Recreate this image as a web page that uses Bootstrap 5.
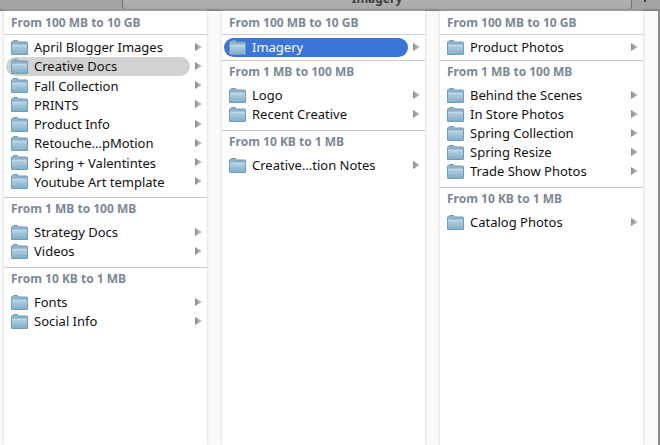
<!DOCTYPE html>
<html lang="en">
<head>
<meta charset="utf-8">
<meta name="viewport" content="width=device-width, initial-scale=1">
<title>Imagery</title>
<link href="https://cdn.jsdelivr.net/npm/bootstrap@5.3.0/dist/css/bootstrap.min.css" rel="stylesheet">
<style>
body { font-family: "Noto Sans", "Open Sans", sans-serif; font-size: 13px; line-height: 19px; color: #111; background: #fafafa; }
.tab-strip { height: 11px; background: #a3a3a3; border-bottom: 2px solid #858585; padding: 0 28px 0 122px; }
.tab-item { height: 10px; background: linear-gradient(#b0b0b0, #a9a9a9); border: 1px solid #717171; border-top: 0; border-radius: 0 0 4px 4px; color: #3f3f3f; }
.tab-title { font-size: 12px; font-weight: 700; line-height: 18px; margin-top: -10px; }
.tab-add { width: 28px; height: 9px; margin-right: -28px; padding-left: 9px; }
.browser { gap: 15px; padding-left: 4px; padding-right: 15px; border-right: 2px solid #8c8c8c; }
.finder-col { flex: 1 1 0; min-width: 0; background: #fff; box-shadow: 0 0 3px #ccc; }
.size-group + .size-group { border-top: 1px solid #c6c6c6; }
.size-head { font-size: 12px; font-weight: 700; line-height: 22px; color: #7b8798; padding-left: 7px; margin: 0; }
.entries { padding: 3px 0 6px; }
.size-group:first-child .size-head { line-height: 23px; border-bottom: 1px solid #cfcfcf; }
.size-group:first-child .entries { padding: 3px 0; }
.size-group:first-child .entries.long-list { min-height: 162px; padding-bottom: 5px; }
.entry { border: 0; background: none; padding: 0 5px 0 2px; text-align: left; color: inherit; height: 19px; }
.entry-label { border-radius: 10px; padding-left: 5px; gap: 6px; height: 19px; }
.entry .arrow { margin-left: 5px; margin-bottom: 2px; }
.chosen .entry-label { background: #d2d2d2; }
.current .entry-label { background: #3b75d7; color: #fff; }
</style>
</head>
<body class="min-vh-100 d-flex flex-column overflow-hidden">
<svg width="0" height="0" class="position-absolute" aria-hidden="true">
  <defs>
    <linearGradient id="fg" x1="0" y1="0" x2="0" y2="1"><stop offset="0" stop-color="#b9d5e5"/><stop offset="1" stop-color="#7fadc9"/></linearGradient>
    <linearGradient id="ag" x1="0" y1="0" x2="1" y2="0"><stop offset="0" stop-color="#8c8c8c"/><stop offset="1" stop-color="#c8c8c8"/></linearGradient>
    <symbol id="folder" viewBox="0 0 17 16">
      <path d="M.5 14V2.500Q.5 1.500 1.500 1.500H2l.5-1H6.500l.8 1.500H15.500Q16.500 2 16.500 3V14Z" fill="#8db4ca" stroke="#6e9ab5"/>
      <path d="M.5 4.500H16.500V14Q16.500 14.500 16 14.500H1Q.5 14.500.5 14Z" fill="url(#fg)" stroke="#6f9cb8"/>
      <path d="M1 5H16" stroke="#cfe3ee"/>
    </symbol>
    <symbol id="arrow" viewBox="0 0 7 8"><path d="M0 0 7 4 0 8Z" fill="url(#ag)"/></symbol>
  </defs>
</svg>
<header class="tab-strip d-flex overflow-hidden">
  <div class="tab-item flex-grow-1 text-center overflow-hidden"><div class="tab-title">Imagery</div></div>
  <div class="tab-add overflow-hidden"><svg class="d-block" width="9" height="9" viewBox="0 0 9 9"><path d="M4 0V2" stroke="#444" stroke-width="2"/></svg></div>
</header>
<main class="browser d-flex flex-grow-1"></main>
<script>
const columns = [
  [["From 100 MB to 10 GB", ["April Blogger Images", "*Creative Docs", "Fall Collection", "PRINTS", "Product Info", "Retouche…pMotion", "Spring + Valentintes", "Youtube Art template"]],
   ["From 1 MB to 100 MB", ["Strategy Docs", "Videos"]],
   ["From 10 KB to 1 MB", ["Fonts", "Social Info"]]],
  [["From 100 MB to 10 GB", ["!Imagery"]],
   ["From 1 MB to 100 MB", ["Logo", "Recent Creative"]],
   ["From 10 KB to 1 MB", ["Creative…tion Notes"]]],
  [["From 100 MB to 10 GB", ["Product Photos"]],
   ["From 1 MB to 100 MB", ["Behind the Scenes", "In Store Photos", "Spring Collection", "Spring Resize", "Trade Show Photos"]],
   ["From 10 KB to 1 MB", ["Catalog Photos"]]]
];
const states = { "*": "chosen", "!": "current" };
const entry = name => {
  const state = states[name[0]] || "";
  return `<button type="button" class="entry d-flex align-items-center w-100 ${state}">
    <span class="entry-label d-flex align-items-center flex-grow-1 text-nowrap overflow-hidden"><svg class="flex-shrink-0" width="17" height="16" aria-hidden="true"><use href="#folder"/></svg><span class="text-truncate">${state ? name.slice(1) : name}</span></span>
    <svg class="arrow flex-shrink-0" width="7" height="8" aria-hidden="true"><use href="#arrow"/></svg></button>`;
};
document.querySelector(".browser").innerHTML = columns.map(groups =>
  `<section class="finder-col">${groups.map(([title, names]) =>
    `<div class="size-group"><h2 class="size-head">${title}</h2><div class="entries d-flex flex-column justify-content-between ${names.length > 6 ? "long-list" : ""}">${names.map(entry).join("")}</div></div>`).join("")}</section>`).join("");
</script>
<script src="https://cdn.jsdelivr.net/npm/bootstrap@5.3.0/dist/js/bootstrap.bundle.min.js"></script>
</body>
</html>
